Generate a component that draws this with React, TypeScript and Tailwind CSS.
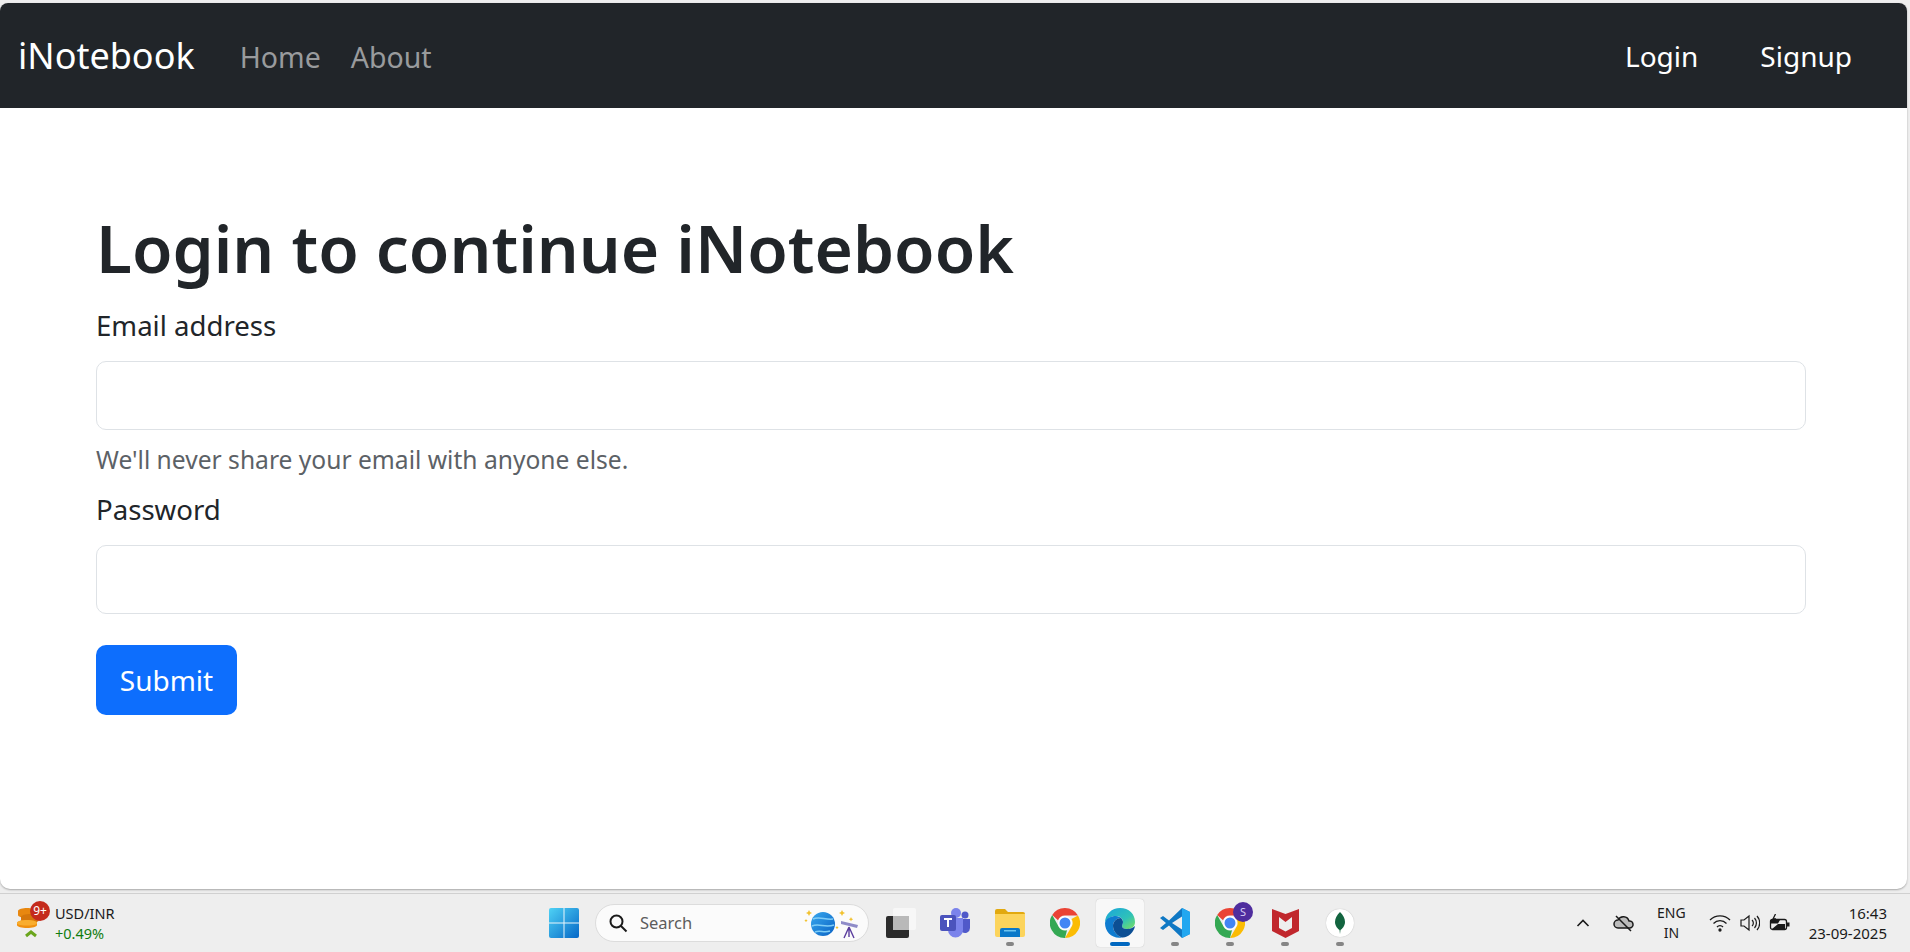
const FONT = "font-['Noto_Sans',sans-serif]";

function WindowsIcon() {
  return (
    <svg width="30" height="30" viewBox="0 0 30 30">
      <defs>
        <linearGradient id="win" x1="0" y1="0" x2="1" y2="1">
          <stop offset="0" stopColor="#4fd2f5" />
          <stop offset="1" stopColor="#0567c7" />
        </linearGradient>
      </defs>
      <rect x="0" y="0" width="30" height="30" rx="2" fill="url(#win)" />
      <path d="M14.5 0h1v30h-1zM0 14.5h30v1H0z" fill="#eaf6fc" />
    </svg>
  );
}

function WidgetIcon() {
  return (
    <div className="relative h-[38px] w-[38px] shrink-0">
      <svg width="26" height="36" viewBox="0 0 26 36" className="absolute left-0 top-0">
        <path d="M2 7c0-2 5-3 9-3s9 1 9 3v4c0 2-5 3-9 3s-9-1-9-3z" fill="#e8870f" />
        <path d="M5 13c0-2 5-3 9-3s9 1 9 3v3c0 2-5 3-9 3s-9-1-9-3z" fill="#d5760b" />
        <path d="M1 19c0-2 5-3 10-3s10 1 10 3v2c0 2-5 3-10 3S1 23 1 21z" fill="#f0900f" />
        <path d="M1 19c0-2 5-3 10-3s10 1 10 3-5 2.500-10 2.500S1 21 1 19z" fill="#f9ad2e" />
        <path d="M10 32l5-4 5 4" fill="none" stroke="#6aa51c" strokeWidth="3" />
      </svg>
      <span className="absolute left-[14px] top-[-3px] flex h-5 w-5 items-center justify-center rounded-full bg-[#c42b1c] text-[12px] text-white">
        9+
      </span>
    </div>
  );
}

function SearchArt() {
  return (
    <svg width="56" height="32" viewBox="0 0 56 32">
      <defs>
        <linearGradient id="planet" x1="0" y1="0" x2="1" y2="1">
          <stop offset="0" stopColor="#38a8ee" />
          <stop offset="1" stopColor="#0a62c4" />
        </linearGradient>
      </defs>
      <circle cx="19" cy="17" r="12" fill="url(#planet)" />
      <path d="M9 12c6-3 12 1 20 0M8 19c7-3 13 2 22-1M11 25c5-2 9 1 15-1" stroke="#7fcdf7" strokeWidth="1.5" fill="none" />
      <path d="M5 3l1 2 2 1-2 1-1 2-1-2-2-1 2-1zM38 3l1 2 2 1-2 1-1 2-1-2-2-1 2-1zM47 10l.7 1.500 1.500.7-1.500.7-.7 1.500-.7-1.500-1.500-.7 1.500-.7zM2 12l.6 1 1 .6-1 .6-.6 1-.6-1-1-.6 1-.6zM33 19l.6 1 1 .6-1 .6-.6 1-.6-1-1-.6 1-.6z" fill="#f2c230" />
      <path d="M37 14l17 4-1 3-16-4z" fill="#8f8cc8" />
      <path d="M45 20l-5 11M45 20l5 11M45 20v10" stroke="#5b3e9e" strokeWidth="1.4" fill="none" />
    </svg>
  );
}

function TaskViewIcon() {
  return (
    <svg width="30" height="30" viewBox="0 0 30 30">
      <rect x="7" y="0" width="23" height="22" rx="2" fill="#f7f7f7" />
      <rect x="0" y="8" width="23" height="22" rx="2" fill="#2b2b2b" />
      <rect x="7" y="8" width="16" height="14" fill="#b9b9b9" />
    </svg>
  );
}

function TeamsIcon() {
  return (
    <svg width="30" height="30" viewBox="0 0 30 30">
      <circle cx="25" cy="7" r="3.5" fill="#5059c9" />
      <path d="M19 11h11v9a5 5 0 0 1-8 4z" fill="#5059c9" />
      <circle cx="16" cy="5" r="5" fill="#7b83eb" />
      <path d="M8 10h15v12a7.500 7.500 0 0 1-15 0z" fill="#7b83eb" />
      <rect x="0" y="7" width="16" height="16" rx="2" fill="#4b53bc" />
      <path d="M4 11h8M8 11v8" stroke="#fff" strokeWidth="2" />
    </svg>
  );
}

function FolderIcon() {
  return (
    <svg width="30" height="28" viewBox="0 0 30 28">
      <path d="M0 2a2 2 0 0 1 2-2h8l3 3h15a2 2 0 0 1 2 2v3H0z" fill="#e2a90f" />
      <path d="M0 5h30v21a2 2 0 0 1-2 2H2a2 2 0 0 1-2-2z" fill="#fcd45c" />
      <path d="M5 21a2 2 0 0 1 2-2h16a2 2 0 0 1 2 2v7H5z" fill="#0a78c9" />
      <rect x="9" y="21" width="12" height="1.500" fill="#6cc3ef" />
    </svg>
  );
}

function ChromeIcon() {
  return (
    <svg width="30" height="30" viewBox="0 0 30 30">
      <path d="M15 0a15 15 0 0 1 13 7.500H15a7.500 7.500 0 0 0-7 4.700L2.200 7A15 15 0 0 1 15 0z" fill="#ea4335" />
      <path d="M28 7.500A15 15 0 0 1 15 30l6.500-11.200A7.500 7.500 0 0 0 21.500 11z" fill="#fbbc04" />
      <path d="M15 30A15 15 0 0 1 2.200 7L8.700 18.800A7.500 7.500 0 0 0 17 22.200z" fill="#34a853" />
      <circle cx="15" cy="15" r="7" fill="#fff" />
      <circle cx="15" cy="15" r="5.500" fill="#4285f4" />
    </svg>
  );
}

function EdgeIcon() {
  return (
    <svg width="30" height="30" viewBox="0 0 30 30">
      <defs>
        <linearGradient id="edge" x1="0" y1="0" x2="1" y2="1">
          <stop offset="0" stopColor="#1aa5dc" />
          <stop offset="0.600" stopColor="#2fc2b8" />
          <stop offset="1" stopColor="#7ce05f" />
        </linearGradient>
      </defs>
      <path d="M15 0c9 0 15 6 15 14 0 5-4 7-8 7-3 0-5-1-5-3 0-1 1-2 1-4 0-3-3-6-7-6C6 8 1 11 0 15 0 6 7 0 15 0z" fill="url(#edge)" />
      <path d="M0 15C1 10 6 8 11 8c2 0 4 1 5 2-5 0-8 4-8 8 0 5 4 10 9 11.500C7 31 0 24 0 15z" fill="#0f7cd0" />
      <path d="M8 18c0-4 3-8 8-8 1 1 2 3 2 4 0 2-1 3-1 4 0 2 2 3 5 3 3 0 6-1 8-3-1 6-7 12-13 11.500-5-1.500-9-6.500-9-11.500z" fill="#0c4f94" />
    </svg>
  );
}

function VsCodeIcon() {
  return (
    <svg width="30" height="30" viewBox="0 0 30 30">
      <path d="M22 0l8 4v22l-8 4-13-12.500-6 4.500-3-2 6-5-6-5 3-2 6 4.500z" fill="#0f78c4" />
      <path d="M22 0l8 4v22l-8 4z" fill="#22a7f0" />
      <path d="M22 8.500L12 15l10 6.500z" fill="#eeeeee" />
    </svg>
  );
}

function McAfeeIcon() {
  return (
    <svg width="27" height="30" viewBox="0 0 27 30">
      <path d="M0 1l13.500 5L27 1v22l-13.500 7L0 23zM7 9v11l6.500 3.500L20 20V9l-6.500 5z" fill="#c1272d" fillRule="evenodd" />
    </svg>
  );
}

function MongoIcon() {
  return (
    <div className="flex h-[28px] w-[28px] items-center justify-center rounded-full bg-white shadow-[0_0_1px_rgba(0,0,0,0.3)]">
      <svg width="10" height="22" viewBox="0 0 10 22">
        <path d="M5 0c3 3 5 6 5 10s-3 7-4.500 8L5 22l-.5-4C3 17 0 14 0 10S2 3 5 0z" fill="#13643f" />
      </svg>
    </div>
  );
}

function TaskItem({ children, open, active }: { children: React.ReactNode; open?: boolean; active?: boolean }) {
  return (
    <div
      className={`relative flex h-[48px] w-[48px] items-center justify-center rounded-[4px] ${
        active ? "bg-[#f8f8f8] shadow-[0_0_1px_rgba(0,0,0,0.25)]" : ""
      }`}
    >
      {children}
      {open && (
        <span
          className={`absolute bottom-[1px] left-1/2 h-[4px] -translate-x-1/2 rounded-full ${
            active ? "w-5 bg-[#0067c0]" : "w-2 bg-[#858585]"
          }`}
        />
      )}
    </div>
  );
}

function Field({ label, help, className }: { label: string; help?: string; className: string }) {
  return (
    <div className={className}>
      <label className="mb-[15px] block text-[27.600px] leading-[42px] text-[#212529]">{label}</label>
      <div className="h-[69px] rounded-[10px] border-[1.5px] border-[#dee2e6] bg-white" />
      {help && <div className="mt-[12px] text-[24.600px] leading-[36px] text-[#5c6166]">{help}</div>}
    </div>
  );
}

export default function App() {
  return (
    <div className={`flex h-[952px] w-[1910px] flex-col overflow-hidden bg-[#eeeeee] ${FONT}`}>
      <div className="flex h-[893px] flex-col pt-[3px]">
        <div className="flex h-[886px] w-[1907px] flex-col overflow-hidden rounded-b-[10px] rounded-t-[8px] bg-white shadow-[0_1px_2px_rgba(0,0,0,0.3)]">
          <nav className="flex h-[105px] shrink-0 items-center justify-between bg-[#212529] pl-[18px] pr-[55px] leading-[42px]">
            <div className="flex items-center">
              <span className="text-[36px] text-white">iNotebook</span>
              <a className="ml-[45px] mt-[2px] text-[28.500px] text-[#999b9d]">Home</a>
              <a className="ml-[30px] mt-[2px] text-[28.500px] text-[#999b9d]">About</a>
            </div>
            <div className="flex items-center gap-[62px] text-[28px] text-white">
              <span>Login</span>
              <span>Signup</span>
            </div>
          </nav>
          <main className="mx-[96px] mt-[100px] w-[1710px]">
            <h1 className="mb-[16px] text-[65.800px] font-semibold leading-[80px] text-[#212529]">Login to continue iNotebook</h1>
            <Field className="mb-[10px]" label="Email address" help="We'll never share your email with anyone else." />
            <Field className="mb-[31px]" label="Password" />
            <button className="h-[70px] w-[141px] rounded-[10px] bg-[#0d6efd] text-[28px] text-white">Submit</button>
          </main>
        </div>
      </div>

      <footer className="flex h-[59px] items-center border-t border-[#d0d0d0] bg-[#eeeeee] pr-[23px] text-[#1a1a1a]">
        <div className="flex w-[549px] shrink-0 items-center pl-[16px]">
          <WidgetIcon />
          <div className="ml-[1px] text-[14.500px] leading-[20px]">
            <div>USD/INR</div>
            <div className="text-[#107c10]">+0.49%</div>
          </div>
        </div>
        <div className="flex items-center">
          <WindowsIcon />
          <div className="ml-[16px] flex h-[38px] w-[274px] items-center rounded-full border border-[#dcdcdc] bg-[#fbfbfb] pl-[12px] pr-[8px]">
            <svg width="20" height="20" viewBox="0 0 20 20" fill="none" stroke="#1a1a1a" strokeWidth="2">
              <circle cx="8.500" cy="8.500" r="6" />
              <path d="M13 13l5.500 5.500" />
            </svg>
            <span className="ml-[12px] text-[16.500px] text-[#5d5d5d]">Search</span>
            <span className="ml-auto">
              <SearchArt />
            </span>
          </div>
          <div className="ml-[17px]">
            <TaskViewIcon />
          </div>
          <div className="ml-[15px] flex">
            <TaskItem><TeamsIcon /></TaskItem>
            <div className="ml-[7px]"><TaskItem open><FolderIcon /></TaskItem></div>
            <div className="ml-[7px]"><TaskItem><ChromeIcon /></TaskItem></div>
            <div className="ml-[7px]"><TaskItem open active><EdgeIcon /></TaskItem></div>
            <div className="ml-[7px]"><TaskItem open><VsCodeIcon /></TaskItem></div>
            <div className="ml-[7px]">
              <TaskItem open>
                <ChromeIcon />
                <span className="absolute right-[1px] top-[3px] flex h-5 w-5 items-center justify-center rounded-full bg-[#4f2d9e] text-[11px] text-[#d8cdf5]">S</span>
              </TaskItem>
            </div>
            <div className="ml-[7px]"><TaskItem open><McAfeeIcon /></TaskItem></div>
            <div className="ml-[7px]"><TaskItem open><MongoIcon /></TaskItem></div>
          </div>
        </div>
        <div className="ml-auto flex items-center">
          <svg width="14" height="10" viewBox="0 0 14 10" fill="none" stroke="#1a1a1a" strokeWidth="1.600">
            <path d="M1.500 8L7 2.500 12.500 8" />
          </svg>
          <svg width="22" height="18" viewBox="0 0 22 18" fill="none" stroke="#1a1a1a" strokeWidth="1.500" className="ml-[23px]">
            <path d="M5 14a4 4 0 0 1 0-8 6 6 0 0 1 11 1 3.500 3.500 0 0 1 1 7z" fill="#bbbbbb" />
            <path d="M3 2l15 15" />
          </svg>
          <div className="ml-[22px] text-center text-[14px] leading-[20px]">
            <div>ENG</div>
            <div>IN</div>
          </div>
          <svg width="22" height="18" viewBox="0 0 22 18" fill="none" stroke="#1a1a1a" strokeWidth="1.300" className="ml-[23px]">
            <path d="M1 6a14 14 0 0 1 20 0M4.500 9.500a9 9 0 0 1 13 0M8 13a4 4 0 0 1 6 0" />
            <circle cx="11" cy="16" r="1" fill="#1a1a1a" />
          </svg>
          <svg width="20" height="18" viewBox="0 0 20 18" fill="none" stroke="#1a1a1a" strokeWidth="1.200" className="ml-[9px]">
            <path d="M1 6h3l5-4v14l-5-4H1zM12 6a4 4 0 0 1 0 6M14.500 4a7.500 7.500 0 0 1 0 10M17 2a10.500 10.500 0 0 1 0 14" />
          </svg>
          <svg width="22" height="18" viewBox="0 0 22 18" fill="none" className="ml-[9px]">
            <rect x="1.500" y="5.500" width="16" height="10" rx="2" stroke="#1a1a1a" strokeWidth="1.300" />
            <path d="M2 6h9l-2 3.500H2zM3 15h13V10H9z" fill="#1a1a1a" />
            <rect x="18" y="8.500" width="2.500" height="4" fill="#1a1a1a" />
            <path d="M6.500 0L4 5h3" stroke="#1a1a1a" strokeWidth="1.300" />
          </svg>
          <div className="ml-[18px] text-right text-[15px] leading-[20px]">
            <div>16:43</div>
            <div>23-09-2025</div>
          </div>
        </div>
      </footer>
    </div>
  );
}
